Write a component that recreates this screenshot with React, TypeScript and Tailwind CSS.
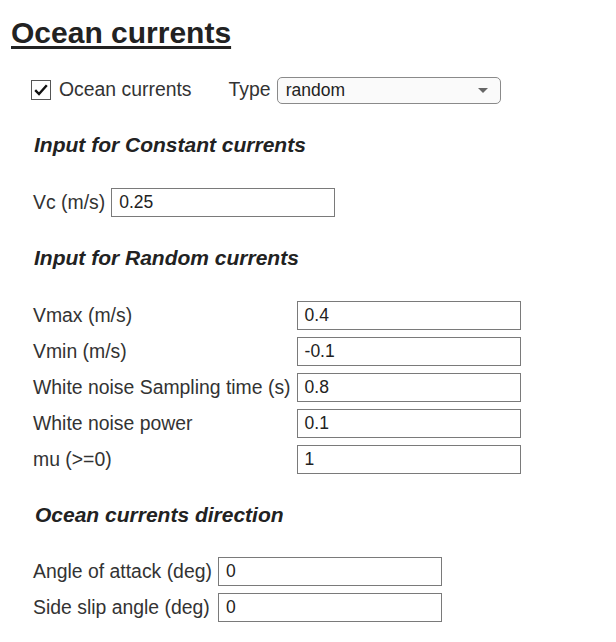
const Field = ({ value }: { value: string }) => (
  <div className="flex h-[29px] w-[224px] items-center border border-[#7a7a7a] bg-white pl-[7px] text-[17.5px] text-[#222]">
    {value}
  </div>
);

const Heading = ({ children, className }: { children: string; className: string }) => (
  <h3 className={`text-[21px] leading-[28px] font-bold italic text-[#222] ${className}`}>{children}</h3>
);

const Row = ({ label, value }: { label: string; value: string }) => (
  <>
    <span className="leading-[29px]">{label}</span>
    <Field value={value} />
  </>
);

export default function App() {
  return (
    <div className="min-h-[642px] w-[616px] bg-white pl-[11px] font-['Liberation_Sans',Arial,sans-serif] text-[19.4px] text-[#333]">
      <h1 className="pt-[16px] text-[30px] leading-[34px] font-bold text-[#222] underline decoration-[3px] underline-offset-[3px]">
        Ocean currents
      </h1>

      <div className="flex flex-col pl-[22px]">
        <div className="mt-[26px] flex h-[28px] items-center">
          <span className="ml-[-2px] flex h-[20px] w-[20px] items-center justify-center border border-[#555] bg-white">
            <svg viewBox="0 0 16 16" className="h-[16px] w-[16px]">
              <path d="M2.2 8.2 L6 12 L13.8 3.2" fill="none" stroke="#111" strokeWidth="2.4" />
            </svg>
          </span>
          <span className="ml-[8px]">Ocean currents</span>
          <span className="ml-[37px]">Type</span>
          <div className="ml-[6px] flex h-[27px] w-[224px] items-center justify-between rounded-[5px] border border-[#8a8a8a] bg-[#fafafa] pr-[12px] pl-[8px] text-[17.5px] text-[#222]">
            <span>random</span>
            <svg viewBox="0 0 10 5" className="h-[5px] w-[10px]">
              <path d="M0 0 H10 L5 5 Z" fill="#666" />
            </svg>
          </div>
        </div>

        <Heading className="mt-[27px] ml-[1px]">Input for Constant currents</Heading>

        <div className="mt-[29px] flex items-center gap-[6px]">
          <span>Vc (m/s)</span>
          <Field value="0.25" />
        </div>

        <Heading className="mt-[27px] ml-[1px]">Input for Random currents</Heading>

        <div className="mt-[29px] grid grid-cols-[auto_224px] items-center gap-x-[6px] gap-y-[7px] self-start">
          <Row label="Vmax (m/s)" value="0.4" />
          <Row label="Vmin (m/s)" value="-0.1" />
          <Row label="White noise Sampling time (s)" value="0.8" />
          <Row label="White noise power" value="0.1" />
          <Row label="mu (>=0)" value="1" />
        </div>

        <Heading className="mt-[27px] ml-[2px]">Ocean currents direction</Heading>

        <div className="mt-[28px] grid grid-cols-[auto_224px] items-center gap-x-[6px] gap-y-[7px] self-start">
          <Row label="Angle of attack (deg)" value="0" />
          <Row label="Side slip angle (deg)" value="0" />
        </div>
      </div>
    </div>
  );
}
